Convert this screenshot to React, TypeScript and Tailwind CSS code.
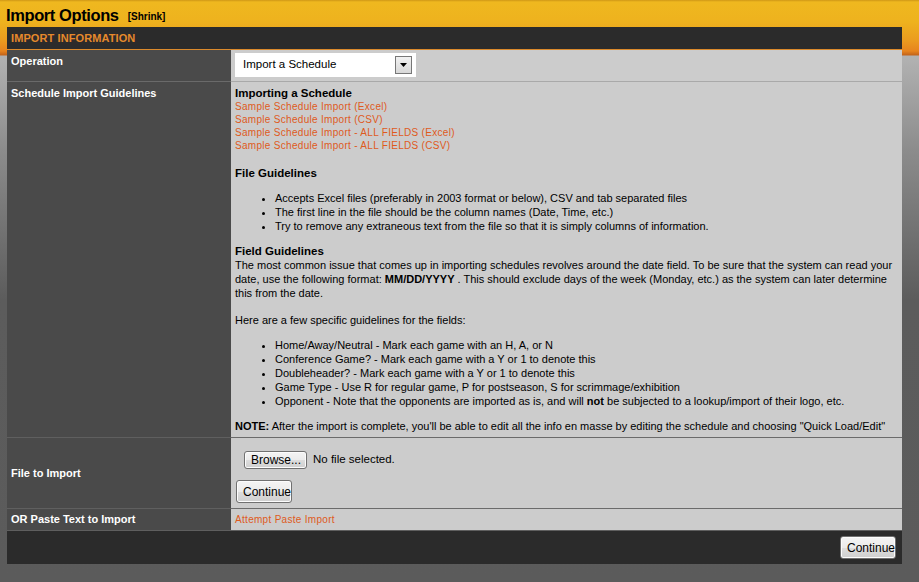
import React from "react";

const linkCls = "block text-[#df5a1c] text-[10px] leading-[13px] tracking-[0.3px]";

function Btn({ children, cls }: { children: React.ReactNode; cls: string }) {
  return (
    <button
      className={
        "border border-[#707070] rounded-[3px] bg-[linear-gradient(to_bottom,#f4f4f4_0%,#ebebeb_50%,#dddddd_51%,#cfcfcf_100%)] text-[12px] text-black leading-none px-[6px] shadow-[inset_0_0_0_1px_#fcfcfc] " +
        cls
      }
    >
      {children}
    </button>
  );
}

export default function App() {
  return (
    <div className="w-[919px] h-[582px] overflow-hidden font-['Liberation_Sans',Arial,sans-serif] bg-[linear-gradient(to_bottom,#cf9716_0px,#efb81f_2px,#eeb21e_22px,#eb9c1f_40px,#e7841e_51px,#c4641a_55px,#b2b2b2_56px,#8c8c8c_150px,#5c5c5c_300px,#5b5b5b_100%)]">
      <div className="h-[27px] flex items-start pl-[6px] pt-[5px] leading-[20px]">
        <span className="text-[16.5px] leading-[20px] font-bold text-black tracking-[-0.4px]">Import Options</span>
        <span className="text-[10px] leading-[20px] font-bold text-black ml-[9px] pt-[2px]">[Shrink]</span>
      </div>
      <div className="ml-[7px] w-[895px]">
        <div className="h-[23px] bg-[#2b2b2b] border-b border-[#dc8a2c] flex items-center pl-[4px]">
          <span className="text-[11px] font-bold text-[#e6892b] tracking-[0.1px]">IMPORT INFORMATION</span>
        </div>
        {/* Row 1 */}
        <div className="flex h-[32px]">
          <div className="w-[224px] bg-[#4a4a4a] border-b border-[#6a6a6a] pl-[4px] pt-[5px] text-[11px] leading-[13px] font-bold text-white">
            Operation
          </div>
          <div className="flex-1 bg-[#cccccc] border-b border-[#a9a9a9] pl-[4px] pt-[3px]">
            <div className="w-[181px] h-[24px] bg-white flex items-center justify-between pl-[8px] pr-[4px]">
              <span className="text-[11.5px] text-black">Import a Schedule</span>
              <div className="w-[17px] h-[18px] border border-[#777] bg-[linear-gradient(to_bottom,#f2f2f2,#d8d8d8)] flex items-center justify-center">
                <svg width="7" height="4" viewBox="0 0 7 4"><path d="M0 0h7L3.5 4z" fill="#000" /></svg>
              </div>
            </div>
          </div>
        </div>
        {/* Row 2 */}
        <div className="flex">
          <div className="w-[224px] bg-[#4a4a4a] border-b border-[#5f5f5f] pl-[4px] pt-[5px] text-[11px] leading-[13px] font-bold text-white">
            Schedule Import Guidelines
          </div>
          <div className="flex-1 bg-[#cccccc] border-b border-[#6b6b6b] pl-[4px] pt-[5px] pb-[4px] text-[11px] leading-[14px] text-black">
            <div className="text-[11.5px] leading-[13px] font-bold">Importing a Schedule</div>
            <a className={linkCls}>Sample Schedule Import (Excel)</a>
            <a className={linkCls}>Sample Schedule Import (CSV)</a>
            <a className={linkCls}>Sample Schedule Import - ALL FIELDS (Excel)</a>
            <a className={linkCls}>Sample Schedule Import - ALL FIELDS (CSV)</a>
            <div className="h-[14px]" />
            <div className="text-[11.5px] font-bold">File Guidelines</div>
            <ul className="list-disc pl-[40px] my-[11px]">
              <li>Accepts Excel files (preferably in 2003 format or below), CSV and tab separated files</li>
              <li>The first line in the file should be the column names (Date, Time, etc.)</li>
              <li>Try to remove any extraneous text from the file so that it is simply columns of information.</li>
            </ul>
            <div className="text-[11.5px] font-bold">Field Guidelines</div>
            <div className="pr-[2px]">
              The most common issue that comes up in importing schedules revolves around the date field. To be sure that the system can read your date, use the following format: <b>MM/DD/YYYY</b> . This should exclude days of the week (Monday, etc.) as the system can later determine this from the date.
            </div>
            <div className="h-[13px]" />
            <div>Here are a few specific guidelines for the fields:</div>
            <ul className="list-disc pl-[40px] my-[11px]">
              <li>Home/Away/Neutral - Mark each game with an H, A, or N</li>
              <li>Conference Game? - Mark each game with a Y or 1 to denote this</li>
              <li>Doubleheader? - Mark each game with a Y or 1 to denote this</li>
              <li>Game Type - Use R for regular game, P for postseason, S for scrimmage/exhibition</li>
              <li>Opponent - Note that the opponents are imported as is, and will <b>not</b> be subjected to a lookup/import of their logo, etc.</li>
            </ul>
            <div>
              <b>NOTE:</b> After the import is complete, you'll be able to edit all the info en masse by editing the schedule and choosing "Quick Load/Edit"
            </div>
          </div>
        </div>
        {/* Row 3 */}
        <div className="flex h-[71px]">
          <div className="w-[224px] bg-[#4a4a4a] border-b border-[#5f5f5f] pl-[4px] flex items-center text-[11px] leading-[13px] font-bold text-white">
            File to Import
          </div>
          <div className="flex-1 bg-[#cccccc] border-b border-[#6b6b6b] pl-[5px] pt-[13px]">
            <div className="flex items-center pl-[8px]">
              <Btn cls="h-[18px] w-[63px] text-[11.5px]">Browse...</Btn>
              <span className="ml-[6px] text-[11.5px] text-black">No file selected.</span>
            </div>
            <Btn cls="mt-[11px] h-[23px] w-[56px]">Continue</Btn>
          </div>
        </div>
        {/* Row 4 */}
        <div className="flex h-[22px]">
          <div className="w-[224px] bg-[#4a4a4a] border-b border-[#5f5f5f] pl-[4px] flex items-center text-[11px] leading-[13px] font-bold text-white">
            OR Paste Text to Import
          </div>
          <div className="flex-1 bg-[#cccccc] border-b border-[#5f5f5f] pl-[4px] flex items-center">
            <a className="text-[#df5a1c] text-[10px] leading-[13px] tracking-[0.3px]">Attempt Paste Import</a>
          </div>
        </div>
        {/* Footer */}
        <div className="h-[33px] bg-[#2b2b2b] flex items-center justify-end pr-[6px]">
          <Btn cls="h-[23px] w-[56px]">Continue</Btn>
        </div>
      </div>
    </div>
  );
}
